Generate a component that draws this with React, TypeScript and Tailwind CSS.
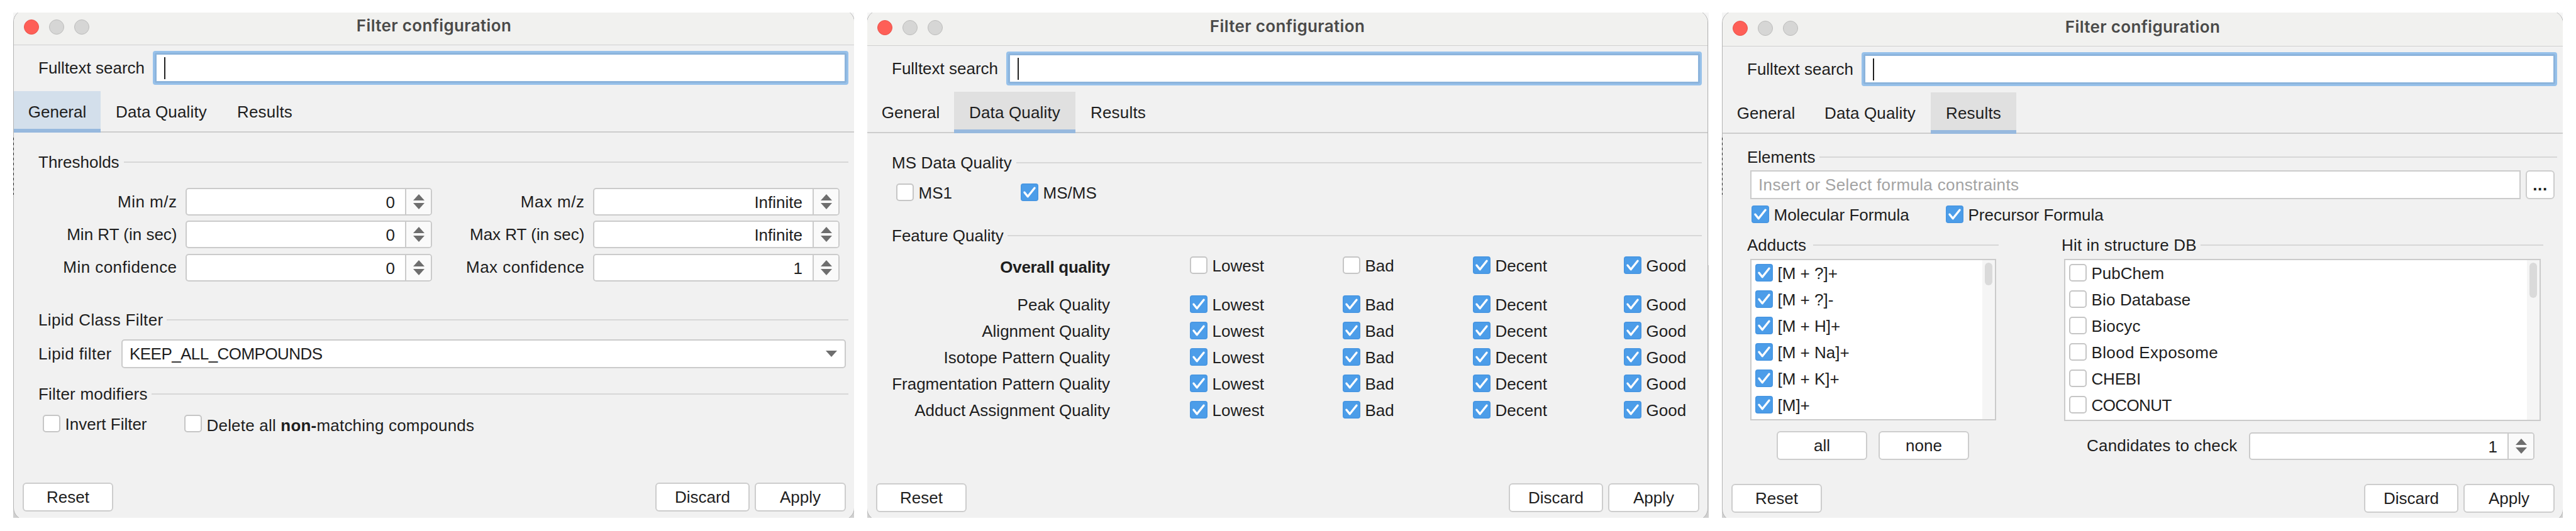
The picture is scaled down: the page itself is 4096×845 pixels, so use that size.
import type { ReactNode } from "react";
import clsx from "clsx";

const TABS = [
  { name: "General", width: "w-[138px]" },
  { name: "Data Quality", width: "w-[193px] tracking-[0.15px]" },
  { name: "Results", width: "w-[136px] tracking-[0.2px]" },
];

function Check({ on }: { on?: boolean }) {
  return on ? (
    <svg viewBox="0 0 28 28" className="size-7 shrink-0">
      <rect width="28" height="28" rx="4" fill="#4695e1" />
      <rect x="1.5" y="1.5" width="25" height="25" rx="2.5" fill="#4c9de9" />
      <path d="M6 14.2 L11.2 20.8 L22 7.2" fill="none" stroke="#fff" strokeWidth="3.4" strokeLinecap="round" strokeLinejoin="round" />
    </svg>
  ) : (
    <span className="size-7 shrink-0 rounded-[5px] border-2 border-[#c6c6c6] bg-white" />
  );
}

function CheckItem({ on, children, className, low }: { on?: boolean; children: ReactNode; className?: string; low?: boolean }) {
  return (
    <label className={clsx("flex h-7 items-center gap-[7.5px]", className)}>
      <Check on={on} />
      <span className={clsx("whitespace-pre", low ? "pt-[6px]" : "pt-[2px]")}>{children}</span>
    </label>
  );
}

function Header({ children, width, className }: { children: ReactNode; width: string; className?: string }) {
  return (
    <div className={clsx("flex h-[30px] shrink-0 items-center", className)}>
      <span className={clsx("shrink-0 whitespace-nowrap", width)}>{children}</span>
      <span className="h-[2px] flex-1 bg-[#d7d7d7]" />
    </div>
  );
}

function Spinner({ value, className }: { value: string; className?: string }) {
  return (
    <div className={clsx("flex h-11 rounded-[5px] border-2 border-[#cbcbcb] bg-white", className)}>
      <span className="flex flex-1 items-center justify-end pt-[2px] pr-[16px]">{value}</span>
      <span className="flex w-[41px] items-center justify-center rounded-r-[3px] border-l-2 border-[#cbcbcb] bg-[#fafafa]">
        <svg viewBox="0 0 18 24" className="h-6 w-[18px]" fill="#6e6e6e">
          <path d="M9 0 L18 10 H0 Z" />
          <path d="M9 24 L18 14 H0 Z" />
        </svg>
      </span>
    </div>
  );
}

function Button({ children, className }: { children: ReactNode; className?: string }) {
  return (
    <button className={clsx("flex h-[46px] items-center justify-center rounded-[6px] border-2 border-[#cdcdcd] bg-white", className)}>
      {children}
    </button>
  );
}

function Dialog({ active, tint, children, frame, inner, dots }: { active: string; tint: string; children: ReactNode; frame: string; inner: string; dots?: boolean }) {
  return (
    <section className={clsx("relative h-[804px] shrink-0 overflow-hidden bg-linear-to-b from-[#f5f5f5] from-50% to-[#cfcfcf] to-50%", frame)}>
      <div className={clsx("flex h-[813px] w-[1338px] flex-col overflow-hidden rounded-[20px] border border-[#b3b3b3] bg-[#f1f1f1]", inner)}>
        <header className="flex h-14 shrink-0 items-center justify-between border-b border-[#d0d0d0] bg-[#f1f1ef] pb-[2px]">
          <div className="flex w-[300px] gap-4 pl-4">
            <span className="size-6 rounded-full border border-[#e9544c] bg-[#fe5f57]" />
            <span className="size-6 rounded-full border border-[#bcbcbb] bg-[#d6d6d5]" />
            <span className="size-6 rounded-full border border-[#bcbcbb] bg-[#d6d6d5]" />
          </div>
          <h1 className="pb-[3px] font-['Inter'] text-[26px] leading-[30px] font-semibold tracking-[0.35px] text-[#4a4a49]">Filter configuration</h1>
          <div className="w-[300px]" />
        </header>
        <div className="mt-[9px] flex h-[54px] shrink-0 items-center pr-[9px] pl-[39px]">
          <span className="w-[182px] pb-[1px] whitespace-nowrap">Fulltext search</span>
          <div className="flex h-[54px] flex-1 items-center rounded-[4px] border-[3px] border-[#97c1ea] bg-white pl-[15px] shadow-[inset_0_0_0_3px_#8cb4dc]">
            <span className="h-[35px] w-[2px] bg-[#222]" />
          </div>
        </div>
        <nav className="mt-[10px] flex h-[66px] shrink-0 shadow-[inset_0_-2px_0_#cdcdcd]">
          {TABS.map((t) => (
            <span
              key={t.name}
              className={clsx("flex items-center justify-center", t.width, t.name === active && clsx(tint, "border-b-[6px] border-[#97b9de] pt-[6px]"))}
            >
              {t.name}
            </span>
          ))}
        </nav>
        <div className="flex h-[557px] shrink-0 flex-col">{children}</div>
        <footer className="flex pr-[13px] pl-[14px]">
          <Button className="w-[144px]">Reset</Button>
          <Button className="mr-[8px] ml-auto w-[150px]">Discard</Button>
          <Button className="w-[145px]">Apply</Button>
        </footer>
      </div>
      {dots && (
        <div className="absolute top-[199px] left-0 h-[91px] w-px bg-[repeating-linear-gradient(to_bottom,#222_0_4px,#b3b3b3_4px_8px)]" />
      )}
    </section>
  );
}

const THRESHOLDS = [
  { min: "Min m/z", low: "0", max: "Max m/z", high: "Infinite", spacing: "tracking-[0.5px]" },
  { min: "Min RT (in sec)", low: "0", max: "Max RT (in sec)", high: "Infinite", spacing: "" },
  { min: "Min confidence", low: "0", max: "Max confidence", high: "1", spacing: "tracking-[0.45px]" },
];

function General() {
  return (
    <>
      <Header width="w-[136px]" className="mt-8 mr-[9px] ml-[39px]">Thresholds</Header>
      <div className="mt-[26px] flex flex-col gap-[8.4px]">
        {THRESHOLDS.map((t) => (
          <div key={t.min} className="grid grid-cols-[273px_392px_256px_392px] items-center">
            <span className={clsx("pr-[13.5px] pb-[1px] text-right", t.spacing)}>{t.min}</span>
            <Spinner value={t.low} />
            <span className={clsx("pr-[13.5px] pb-[1px] text-right", t.spacing)}>{t.max}</span>
            <Spinner value={t.high} />
          </div>
        ))}
      </div>
      <Header width="w-[204px] tracking-[0.35px]" className="mt-[46px] mr-[9px] ml-[39px]">Lipid Class Filter</Header>
      <div className="mt-4 flex items-center pr-[13px] pl-[39px]">
        <span className="w-[132px] tracking-[0.45px]">Lipid filter</span>
        <div className="flex h-[46px] flex-1 items-center justify-between rounded-[5px] border-2 border-[#cbcbcb] bg-white pr-[12px] pl-[11px]">
          <span className="tracking-[-0.55px]">KEEP_ALL_COMPOUNDS</span>
          <svg viewBox="0 0 18 10" className="h-[10px] w-[18px]" fill="#6e6e6e">
            <path d="M9 10 L18 0 H0 Z" />
          </svg>
        </div>
      </div>
      <Header width="w-[180px] tracking-[0.2px]" className="mt-[26px] mr-[9px] ml-[39px]">Filter modifiers</Header>
      <div className="mt-[18px] flex pl-[46px]">
        <CheckItem className="w-[225px]">Invert Filter</CheckItem>
        <CheckItem low className="tracking-[0.2px]">
          Delete all <b>non-</b>matching compounds
        </CheckItem>
      </div>
    </>
  );
}

const LEVELS = ["Lowest", "Bad", "Decent", "Good"];
const QUALITIES = ["Peak Quality", "Alignment Quality", "Isotope Pattern Quality", "Fragmentation Pattern Quality", "Adduct Assignment Quality"];

function QualityRow({ label, from = 0, bold }: { label: string; from?: number; bold?: boolean }) {
  return (
    <div className="grid h-7 grid-cols-[513px_243px_207px_240px_120px] items-center">
      <span
        className={clsx(
          "pr-[127px] text-right leading-[20px] whitespace-nowrap",
          bold ? "pt-[5px] font-bold tracking-[-0.3px]" : "pt-[2px]",
        )}
      >
        {label}
      </span>
      {LEVELS.map((l, i) => (
        <CheckItem key={l} on={i >= from}>{l}</CheckItem>
      ))}
    </div>
  );
}

function DataQuality() {
  return (
    <>
      <Header width="w-[198px] tracking-[0.1px]" className="mt-8 mr-[9px] ml-[39px]">MS Data Quality</Header>
      <div className="mt-[18px] flex pl-[46px]">
        <CheckItem className="w-[198px]">MS1</CheckItem>
        <CheckItem on>MS/MS</CheckItem>
      </div>
      <Header width="w-[184px]" className="mt-[40px] mr-[9px] ml-[39px]">Feature Quality</Header>
      <div className="mt-[18px] mb-[34px]">
        <QualityRow label="Overall quality" from={2} bold />
      </div>
      <div className="flex flex-col gap-[14.1px]">
        {QUALITIES.map((q) => (
          <QualityRow key={q} label={q} />
        ))}
      </div>
    </>
  );
}

type Entry = { name: string; spacing?: string };

function List({ items, on, className, thumb }: { items: Entry[]; on?: boolean; className: string; thumb: string }) {
  return (
    <div className={clsx("mt-[6.5px] flex justify-between border-2 border-[#cbcbcb] bg-white", className)}>
      <div className="flex flex-col gap-[14.1px] pt-[6px] pl-[6px]">
        {items.map((t) => (
          <CheckItem key={t.name} on={on} className={t.spacing}>{t.name}</CheckItem>
        ))}
      </div>
      <div className="flex w-[20px] justify-center bg-[#f5f5f5] pt-[4px]">
        <span className={clsx("w-[12px] rounded-full bg-[#dadada]", thumb)} />
      </div>
    </div>
  );
}

const ADDUCTS: Entry[] = [
  { name: "[M + ?]+" },
  { name: "[M + ?]-" },
  { name: "[M + H]+" },
  { name: "[M + Na]+" },
  { name: "[M + K]+" },
  { name: "[M]+" },
];

const DATABASES: Entry[] = [
  { name: "PubChem" },
  { name: "Bio Database", spacing: "tracking-[0.15px]" },
  { name: "Biocyc", spacing: "tracking-[0.3px]" },
  { name: "Blood Exposome", spacing: "tracking-[0.35px]" },
  { name: "CHEBI", spacing: "tracking-[-0.2px]" },
  { name: "COCONUT", spacing: "tracking-[-0.6px]" },
];

function Results() {
  return (
    <>
      <Header width="w-[115px]" className="mt-[22px] mr-[9px] ml-[39px]">Elements</Header>
      <div className="mt-[6px] flex pl-[44px]">
        <div className="flex h-[46px] w-[1225px] items-center border-2 border-[#cbcbcb] bg-white pl-[11px] tracking-[0.35px] text-[#a3a3a3]">
          Insert or Select formula constraints
        </div>
        <Button className="ml-[8px] w-[46px] font-bold tracking-[0.6px]">...</Button>
      </div>
      <div className="mt-[10px] flex pl-[46px]">
        <CheckItem on className="w-[309px]">Molecular Formula</CheckItem>
        <CheckItem on>Precursor Formula</CheckItem>
      </div>
      <div className="mt-5 flex pl-[39px]">
        <div className="w-[400px]">
          <Header width="w-[105px]">Adducts</Header>
          <List on className="ml-[5px] h-[257px] w-[391px]" thumb="h-[36px]" items={ADDUCTS} />
          <div className="mt-[17.5px] flex gap-[18px] pl-[47px]">
            <Button className="w-[144px]">all</Button>
            <Button className="w-[144px]">none</Button>
          </div>
        </div>
        <div className="ml-[100px] w-[766px]">
          <Header width="w-[221px] tracking-[0.2px]">Hit in structure DB</Header>
          <List className="ml-[4px] h-[258px] w-[758px]" thumb="h-[56px]" items={DATABASES} />
          <div className="mt-[18.5px] flex items-center pl-[40px]">
            <span className="w-[258px] pb-[2px] tracking-[0.2px]">Candidates to check</span>
            <Spinner value="1" className="w-[454px]" />
          </div>
        </div>
      </div>
    </>
  );
}

export default function App() {
  return (
    <main className="flex h-[845px] w-[4096px] overflow-hidden bg-white pt-5 pl-[21px] font-['Liberation_Sans',sans-serif] text-[26px] leading-[30px] text-[#1e1e1e]">
      <Dialog active="General" tint="bg-[#d3dfeb]" frame="w-[1337px]" inner="-mt-[5px]" dots>
        <General />
      </Dialog>
      <Dialog active="Data Quality" tint="bg-[#e0e0e0]" frame="ml-[21px] w-[1338px]" inner="-mt-[4px] -ml-px">
        <DataQuality />
      </Dialog>
      <Dialog active="Results" tint="bg-[#e0e0e0]" frame="ml-[21px] w-[1337px]" inner="-mt-[3px]" dots>
        <Results />
      </Dialog>
    </main>
  );
}
